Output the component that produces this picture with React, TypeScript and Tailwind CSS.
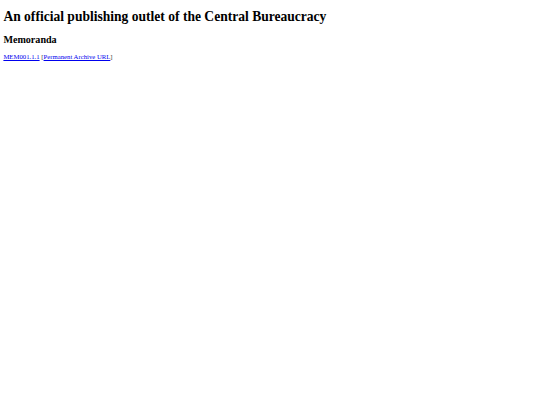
import React from 'react';

// Plain document page: heading, section title and a reference line with links
const App: React.FC = () => {
  return (
    <div className="min-h-[405px] bg-white px-[3.4px] py-[0.1px] text-black" style={{ fontFamily: '"Liberation Serif", "Times New Roman", serif' }}>
      <h1 className="my-[9px] text-[13.55px] font-bold leading-[normal]">
        An official publishing outlet of the Central Bureaucracy
      </h1>
      <h2 className="my-[8.4px] text-[10.1px] font-bold leading-[normal]">Memoranda</h2>
      <p className="my-[6.7px] text-[6.72px] leading-[normal]">
        <a href="#" className="text-[#0000ee] underline">MEM001.1.1</a>{' '}
        <span className="text-[#333]">[</span>
        <a href="#" className="text-[#0000ee] underline">Permanent Archive URL</a>
        <span className="text-[#333]">]</span>
      </p>
    </div>
  );
};

export default App;
